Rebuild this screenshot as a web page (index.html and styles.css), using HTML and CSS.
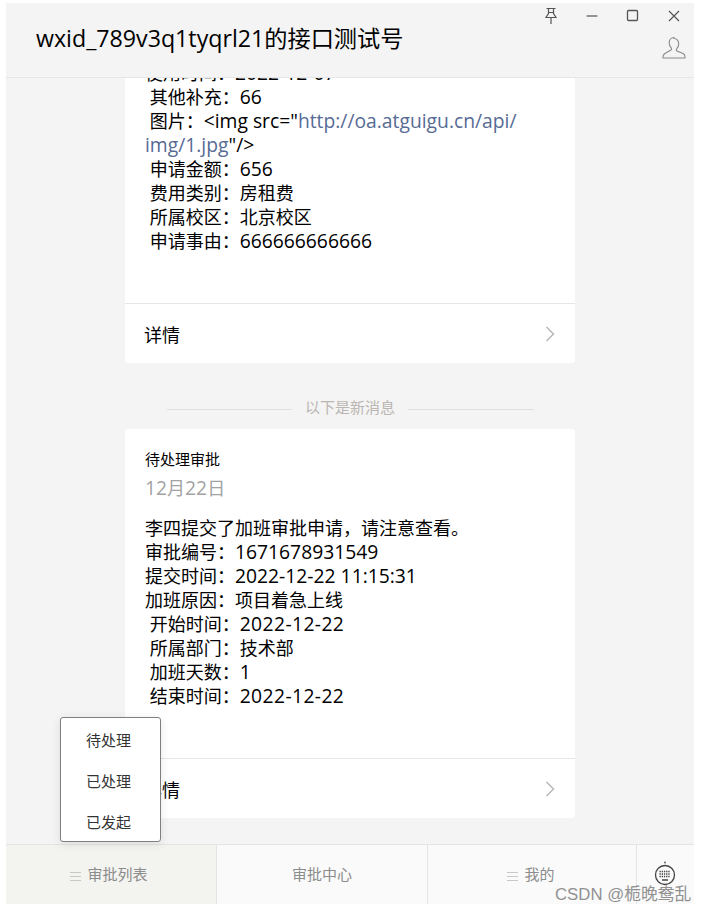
FILE: index.html
```html
<!DOCTYPE html>
<html lang="zh">
<head>
<meta charset="utf-8">
<title>wxid_789v3q1tyqrl21的接口测试号</title>
<link rel="stylesheet" href="styles.css">
</head>
<body>
<div class="window">
  <header class="titlebar">
    <h1 class="title">wxid_789v3q1tyqrl21的接口测试号</h1>
    <div class="controls">
      <div class="winbtns">
        <svg class="ico" width="14" height="18" viewBox="0 0 14 18"><path d="M2.500 1.500h9M4.500 1.500v5L2 10.500h10L9.500 6.500v-5M4.500 5.500h5M7 10.500V17" fill="none" stroke="#555" stroke-width="1.200"/></svg>
        <svg class="ico" width="14" height="14" viewBox="0 0 14 14"><path d="M1.500 7h11" stroke="#555" stroke-width="1.200"/></svg>
        <svg class="ico" width="14" height="14" viewBox="0 0 14 14"><rect x="1.500" y="1.500" width="10" height="10" rx="1" fill="none" stroke="#555" stroke-width="1.300"/></svg>
        <svg class="ico" width="14" height="14" viewBox="0 0 14 14"><path d="M2 2l10 10M12 2L2 12" stroke="#555" stroke-width="1.200"/></svg>
      </div>
      <svg class="user" width="24" height="24" viewBox="0 0 24 24"><path d="M12 1.500c-3 0-4.800 2.300-4.800 5.300 0 2.200 1 4 2 5 .6.600.5 1.800-.3 2.300L3 17.500c-1.300.8-2 1.800-2 3v1.500h22v-1.500c0-1.200-.7-2.200-2-3l-6-2.400c-.8-.5-.9-1.700-.3-2.300 1-1 2-2.800 2-5 .1-3-1.700-5.300-4.700-5.300z" fill="none" stroke="#8a8a8a" stroke-width="1.100"/></svg>
    </div>
  </header>

  <main class="messages">
    <article class="card">
      <div class="body">
        <p>使用时间：<span class="lat">2022-12-07</span></p>
        <p>&nbsp;其他补充：<span class="lat">66</span></p>
        <p>&nbsp;图片：<span class="lat">&lt;img src="<a class="link">http://oa.atguigu.cn/api/<br>img/1.jpg</a>"/&gt;</span></p>
        <p>&nbsp;申请金额：<span class="lat">656</span></p>
        <p>&nbsp;费用类别：房租费</p>
        <p>&nbsp;所属校区：北京校区</p>
        <p>&nbsp;申请事由：<span class="lat">666666666666</span></p>
      </div>
      <div class="detail">
        <span>详情</span>
        <svg width="10" height="16" viewBox="0 0 10 16"><path d="M1.500 1l7 7-7 7" fill="none" stroke="#b8b8b8" stroke-width="1.500"/></svg>
      </div>
    </article>

    <div class="divider"><i></i><span>以下是新消息</span><i></i></div>

    <article class="card">
      <div class="head">
        <div class="name">待处理审批</div>
        <div class="date"><span class="lat">12</span>月<span class="lat">22</span>日</div>
      </div>
      <div class="body">
        <p>李四提交了加班审批申请，请注意查看。</p>
        <p>审批编号：<span class="lat">1671678931549</span></p>
        <p>提交时间：<span class="lat">2022-12-22 11:15:31</span></p>
        <p>加班原因：项目着急上线</p>
        <p>&nbsp;开始时间：<span class="lat wide">2022-12-22</span></p>
        <p>&nbsp;所属部门：技术部</p>
        <p>&nbsp;加班天数：<span class="lat">1</span></p>
        <p>&nbsp;结束时间：<span class="lat wide">2022-12-22</span></p>
      </div>
      <div class="detail">
        <span>详情</span>
        <svg width="10" height="16" viewBox="0 0 10 16"><path d="M1.500 1l7 7-7 7" fill="none" stroke="#b8b8b8" stroke-width="1.500"/></svg>
      </div>
    </article>
  </main>

  <footer class="tabs">
    <div class="tab tab-first"><span class="bars"></span>审批列表</div>
    <div class="tab tab-second">审批中心</div>
    <div class="tab tab-third"><span class="bars"></span>我的</div>
    <div class="tab tab-kbd">
      <svg width="24" height="28" viewBox="0 0 24 28"><circle cx="12" cy="2.500" r="1" fill="#666"/><circle cx="12" cy="15" r="9.500" fill="none" stroke="#444" stroke-width="1.300"/><path d="M6.500 11.500h11M6.500 14h11M6.500 16.500h11" stroke="#444" stroke-width="1.500" stroke-dasharray="1.300 .9"/><path d="M9 20h6" stroke="#444" stroke-width="1.500"/></svg>
    </div>
  </footer>

  <div class="popup">
    <div class="popup-item">待处理</div>
    <div class="popup-item">已处理</div>
    <div class="popup-item">已发起</div>
  </div>
</div>
<div class="watermark">CSDN @栀晚鸯乱</div>
</body>
</html>
```
FILE: styles.css
```css
* { box-sizing: border-box; }
html, body { margin: 0; height: 913px; background: #fff; overflow: hidden; }
body {
  padding: 3px 12px 9px 6px;
  font-family: "Open Sans", "Noto Sans CJK SC", sans-serif;
  color: #000;
  position: relative;
}
.window {
  position: relative;
  height: 901px;
  background: #f4f4f4;
  display: flex;
  flex-direction: column;
  overflow: hidden;
}
.titlebar {
  flex: none;
  height: 75px;
  display: flex;
  justify-content: space-between;
  border-bottom: 1px solid #e6e6e6;
  background: #f4f4f4;
  z-index: 1;
}
.title {
  margin: 0;
  padding: 17px 0 0 30px;
  font-size: 23.200px;
  line-height: 36px;
  font-weight: 400;
}
.controls { display: flex; flex-direction: column; align-items: flex-end; padding-right: 13px; }
.winbtns { display: flex; gap: 27px; align-items: center; height: 24px; padding: 2px 0 0 0; }
.user { margin-top: 9px; margin-right: -5px; }
.messages {
  flex: 1;
  min-height: 0;
  overflow: hidden;
  display: flex;
  flex-direction: column;
  justify-content: flex-end;
  align-items: center;
  padding-bottom: 26px;
}
.card { flex: none; width: 450px; background: #fff; border-radius: 3px; }
.body { padding: 0 20px 50px; font-size: 18px; line-height: 24px; }
.body p { margin: 0; white-space: nowrap; }
.lat { font-size: 19.300px; line-height: 1; }
.wide { letter-spacing: .4px; }
.link { color: #576b95; }
.detail {
  height: 60px;
  border-top: 1px solid #e6e6e6;
  padding: 0 20px;
  display: flex;
  justify-content: space-between;
  align-items: center;
  font-size: 18px;
}
.detail span { margin-left: -1px; }
.divider {
  flex: none;
  width: 367px;
  height: 66px;
  display: flex;
  align-items: center;
  gap: 13px;
  color: #bbb6b2;
  font-size: 15px;
  line-height: 20px;
  padding-top: 21px;
}
.divider i { flex: 1; height: 1px; background: #e0e0e0; margin-top: 5px; }
.head { padding: 19px 20px 0; }
.name { font-size: 15px; line-height: 22px; }
.date { font-size: 18px; line-height: 24px; color: #a3a3a3; margin-top: 6px; margin-bottom: 16px; }
.tabs {
  flex: none;
  height: 60px;
  display: flex;
  border-top: 1px solid #e4e4e4;
  background: #fafafa;
  font-size: 15px;
  color: #8c8c8c;
}
.tab {
  display: flex;
  align-items: center;
  justify-content: center;
  gap: 6px;
  border-right: 1px solid #e4e4e4;
  padding-bottom: 2px;
}
.tab-first { width: 211px; background: #f3f3f0; padding-right: 4px; }
.tab-second { width: 211px; }
.tab-third { width: 209px; padding-right: 2px; }
.tab-kbd { flex: 1; border-right: 0; padding: 0 2px 1px 0; }
.bars {
  width: 11px;
  height: 9px;
  margin-top: 5px;
  border-top: 1px solid #c8c8c8;
  border-bottom: 1px solid #c8c8c8;
  background: linear-gradient(#c8c8c8, #c8c8c8) center / 100% 1px no-repeat;
}
.popup {
  position: absolute;
  left: 54px;
  top: 714px;
  width: 101px;
  height: 125px;
  padding: 2px 0;
  background: #fff;
  border: 1px solid #7f7f7f;
  border-radius: 3px;
  box-shadow: 0 2px 10px rgba(0, 0, 0, .1);
  z-index: 2;
}
.popup-item {
  height: 41px;
  line-height: 41px;
  text-align: center;
  font-size: 15px;
  color: #333;
  padding-right: 4px;
}
.watermark {
  position: absolute;
  left: 555px;
  top: 885px;
  font-family: "Liberation Sans", "Noto Sans CJK SC", sans-serif;
  font-size: 16.800px;
  line-height: 20px;
  color: #7f7f7f;
  opacity: .85;
  white-space: nowrap;
}
```
